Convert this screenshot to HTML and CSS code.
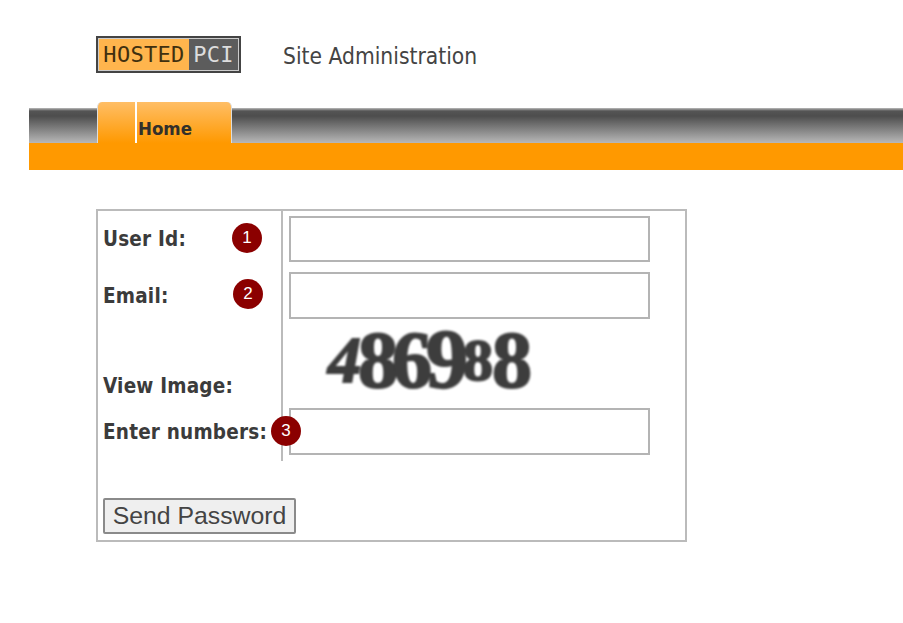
FILE: index.html
```html
<!DOCTYPE html>
<html lang="en">

<head>
  <meta charset="UTF-8">
  <title>Site Administration</title>
  <link rel="stylesheet" href="styles.css">
</head>

<body>
  <div class="header">
    <div class="logo">
      <span class="logo-l">HOSTED</span><span class="logo-r">PCI</span>
    </div>
    <div class="site-title">Site Administration</div>
  </div>

  <div class="nav">
    <div class="tab">
      <div class="tab-gap"></div>
      <div class="tab-label">Home</div>
    </div>
  </div>

  <div class="box">
    <div class="fields">
      <div class="lab row-1">User Id:<span class="num num-1">1</span></div>
      <div class="val row-1"><input class="txt" type="text"></div>

      <div class="lab row-2">Email:<span class="num num-2">2</span></div>
      <div class="val row-2"><input class="txt" type="text"></div>

      <div class="lab row-3">View Image:</div>
      <div class="val row-3">
        <div class="captcha"><span class="d4">4</span><span>8</span><span>6</span><span class="d9">9</span><span class="small">8</span><span>8</span></div>
      </div>

      <div class="lab row-4">Enter numbers:<span class="num num-3">3</span></div>
      <div class="val row-4"><input class="txt" type="text"></div>
    </div>
    <button class="send" type="button">Send Password</button>
  </div>
</body>

</html>
```

FILE: styles.css
```css
* {
  padding: 0;
  margin: 0;
  box-sizing: border-box;
}

body {
  background-color: #fff;
  font-family: "DejaVu Sans", sans-serif;
  font-stretch: condensed;
  color: #333;
}

.header {
  height: 102px;
  padding: 36px 0 0 96px;
  display: flex;
  align-items: flex-start;
}

.logo {
  width: 145px;
  height: 37px;
  display: flex;
  border: 2px solid #444;
  outline: 1px solid #ccc;
  outline-offset: -3px;
  font-family: "DejaVu Sans Mono", monospace;
  font-stretch: normal;
  font-size: 22px;
  letter-spacing: 0.3px;
  line-height: 31px;
}

.logo-l {
  width: 90px;
  margin: 1px 0 1px 1px;
  background-color: #ffb54d;
  color: #40300f;
  text-align: center;
}

.logo-r {
  flex: 1;
  margin: 1px 1px 1px 0;
  background-color: #5c5c5c;
  color: #ddd;
  text-align: center;
}

.site-title {
  margin: 6px 0 0 42px;
  font-size: 22.6px;
  line-height: 28px;
  color: #444;
}

.nav {
  margin-left: 29px;
  height: 68px;
  padding: 6px 0 0 0;
  border-bottom: 27px solid #ff9900;
  background: linear-gradient(#fff 0, #fff 6px, #bbb 6px, #555 9px, #4d4d4d 14px, #b8b8b8 41px);
}

.tab {
  margin-left: 68px;
  width: 135px;
  height: 41px;
  margin-top: -6px;
  position: relative;
  border-radius: 5px 5px 0 0;
  background: linear-gradient(#ffbe66, #ff9900);
  border-left: 1px solid #ddd;
  border-right: 1px solid #ddd;
}

.tab-gap {
  position: absolute;
  left: 37px;
  top: 0;
  bottom: 0;
  width: 2px;
  background-color: #fff;
}

.tab-label {
  padding: 15px 0 0 40px;
  font-size: 18.5px;
  line-height: 24px;
  font-weight: bold;
  color: #33302a;
}

.box {
  width: 591px;
  height: 333px;
  margin: 39px 0 0 96px;
  border: 2px solid #bbb;
}

.fields {
  display: grid;
  grid-template-columns: 185px 1fr;
  grid-template-rows: 58px 56px 78px 58px;
}

.lab {
  position: relative;
  padding-left: 5px;
  border-right: 2px solid #bbb;
  display: flex;
  align-items: center;
  font-size: 20.5px;
  font-weight: bold;
  letter-spacing: 0.2px;
  color: #3b3b3b;
}

.val {
  padding-left: 6px;
}

.row-1.val { padding-top: 5px; }
.row-2.val { padding-top: 3px; }
.row-4.val { padding-top: 5px; }
.row-1.lab { padding-bottom: 3px; }
.row-2.lab { padding-bottom: 3px; }
.row-3.lab { align-items: flex-end; padding-bottom: 5px; }
.row-4.lab { padding-bottom: 1px; }

.txt {
  display: block;
  width: 361px;
  height: 46px;
  border: 2px solid #b4b4b4;
  background-color: #fff;
}

.row-2 .txt,
.row-4 .txt {
  height: 47px;
}

.num {
  position: absolute;
  width: 30px;
  height: 30px;
  border-radius: 50%;
  background-color: #8b0000;
  color: #fff;
  font-family: "Liberation Sans", sans-serif;
  font-size: 17px;
  font-weight: normal;
  letter-spacing: 0;
  line-height: 30px;
  text-align: center;
}

.num-1 { left: 134px; top: 12px; }
.num-2 { left: 135px; top: 10px; }
.num-3 { left: 173px; top: 13px; }

.captcha {
  width: 210px;
  height: 70px;
  margin-left: 39px;
  display: flex;
  align-items: center;
  font-family: "Liberation Serif", serif;
  font-size: 80px;
  font-weight: bold;
  line-height: 70px;
  color: #3d3d3d;
  letter-spacing: -6px;
  -webkit-text-stroke: 2px #3d3d3d;
  filter: blur(1px);
}

.captcha .d4 {
  font-size: 66px;
  font-style: italic;
  letter-spacing: -3px;
}

.captcha .d9 {
  font-size: 84px;
  letter-spacing: -5px;
}

.captcha .small {
  font-size: 60px;
  letter-spacing: -1px;
}

.send {
  display: block;
  width: 193px;
  height: 36px;
  margin: 37px 0 0 5px;
  border: 2px solid #8a8a8a;
  border-radius: 2px;
  background-color: #efefef;
  font-family: "Liberation Sans", sans-serif;
  font-stretch: normal;
  font-size: 24.8px;
  color: #444;
}
```
